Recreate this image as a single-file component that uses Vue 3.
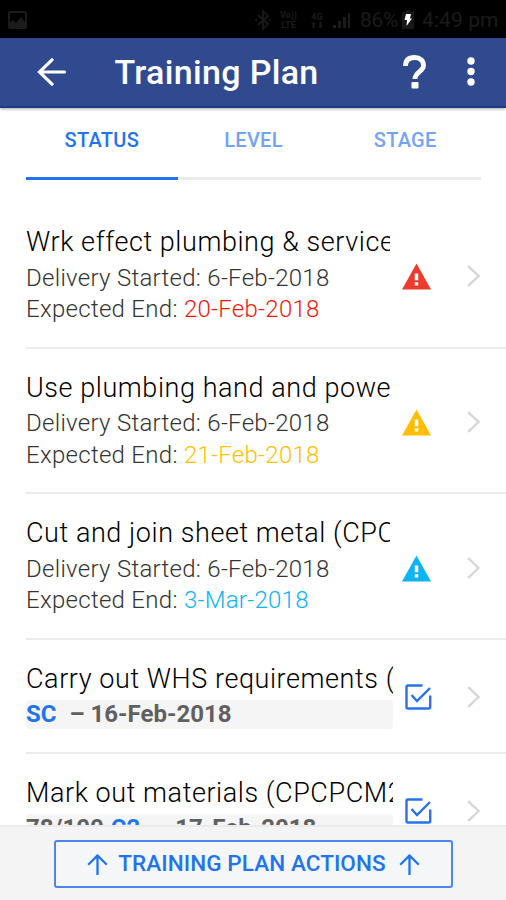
<script setup>
const tabs = ['STATUS', 'LEVEL', 'STAGE']
const items = [
  { title: 'Wrk effect plumbing & service', end: '20-Feb-2018', tone: 'red' },
  { title: 'Use plumbing hand and powe', end: '21-Feb-2018', tone: 'amber' },
  { title: 'Cut and join sheet metal (CPC', end: '3-Mar-2018', tone: 'cyan' },
  { title: 'Carry out WHS requirements (', done: true, code: 'SC', date: '– 16-Feb-2018' },
  { title: 'Mark out materials (CPCPCM2', done: true, score: '78/100', code: 'C2', date: '– 17-Feb-2018' },
]
</script>

<template>
  <div class="screen">
    <div class="statusbar">
      <svg class="picture" width="19" height="18" viewBox="0 0 19 18">
        <rect x="1" y="1" width="17" height="16" rx="1.5" fill="none" stroke="currentColor" stroke-width="2" />
        <path d="M1 12l4-3 3 3 5-6 5 6v5H1z" fill="currentColor" />
      </svg>
      <div class="indicators">
        <svg class="bt" width="18" height="20" viewBox="0 0 18 20" fill="none" stroke="currentColor" stroke-width="1.7">
          <path d="M4 5l10 9-5 5V1l5 5-10 9M1 10h2M15 10h2" />
        </svg>
        <div class="stack volte"><span>Vo))</span><span>LTE</span></div>
        <div class="stack g4"><span>4G</span><svg width="12" height="6" viewBox="0 0 12 6" fill="currentColor"><path d="M0 2l2.500-2L5 2H3.500v4h-2V2zM7 4l2.500 2L12 4h-1.500V0h-2v4z" /></svg></div>
        <svg class="signal" width="18" height="16" viewBox="0 0 18 16" fill="currentColor">
          <path d="M0 13h3v3H0zM5 9h3v7H5zM10 5h3v11h-3zM15 1h2v15h-2z" />
        </svg>
        <span class="percent">86%</span>
        <svg class="battery" width="12" height="20" viewBox="0 0 12 20">
          <path d="M4 0h4v2h4v17H0V2h4z" fill="#171717" />
          <path d="M4 4h5L8 8.500h2L4.500 16l.5-6H2.500z" fill="#fff" />
        </svg>
        <span class="clock">4:49 pm</span>
      </div>
    </div>

    <header class="toolbar">
      <svg class="back" width="30" height="28" viewBox="0 0 30 28" fill="none" stroke="#fff" stroke-width="3.200" stroke-linecap="round">
        <path d="M15 1.800L2.500 14 15 26.200M2.500 14H27.500" />
      </svg>
      <h1>Training Plan</h1>
      <svg class="help" width="26" height="36" viewBox="0 0 26 36">
        <path d="M3.500 12C3.500 6 7 3.500 12.500 3.500s9 2.800 9 8c0 6-8.500 6.500-8.500 13.500" fill="none" stroke="#fff" stroke-width="4.800" />
        <rect x="9.500" y="28" width="7" height="6.500" rx="1" fill="#fff" />
      </svg>
      <svg class="more" width="8" height="30" viewBox="0 0 8 30" fill="#fff">
        <circle cx="4" cy="4" r="3.700" /><circle cx="4" cy="14.500" r="3.700" /><circle cx="4" cy="25" r="3.700" />
      </svg>
    </header>

    <nav class="tabs">
      <div v-for="(t, i) in tabs" :key="t" class="tab" :class="{ active: i === 0 }">{{ t }}</div>
    </nav>

    <main class="list">
      <article v-for="it in items" :key="it.title" class="item" :class="{ done: it.done }">
        <div class="body">
          <h2>{{ it.title }}</h2>
          <template v-if="!it.done">
            <p>Delivery Started: 6-Feb-2018</p>
            <p>Expected End: <span :class="it.tone">{{ it.end }}</span></p>
          </template>
          <div v-else class="result">
            <span v-if="it.score" class="score">{{ it.score }}</span>
            <span class="code">{{ it.code }}</span>
            <span class="date" :class="{ wide: it.score }">{{ it.date }}</span>
          </div>
        </div>
        <svg v-if="!it.done" class="warn" :class="it.tone" width="29" height="27" viewBox="0 0 30 27">
          <path d="M15 0l15 27H0z" fill="currentColor" />
          <path d="M13.200 10.500h3.600v7h-3.600zM13.200 19.500h3.600v3.200h-3.600z" fill="#fff" />
        </svg>
        <svg v-else class="check" width="27" height="26" viewBox="0 0 27 26" fill="none" stroke="#2671ed" stroke-width="2.400">
          <path d="M17.500 1.500H3Q1.500 1.500 1.500 3v20Q1.500 24.500 3 24.500h20.700q1.500 0 1.500-1.500V11.500" />
          <path d="M6.500 11l5.500 6L25 4" />
        </svg>
        <svg class="chevron" width="13" height="22" viewBox="0 0 13 22" fill="none" stroke="#d6d6d6" stroke-width="2.300">
          <path d="M1.200 1.200L11.500 11 1.200 20.800" />
        </svg>
      </article>
    </main>

    <footer class="footer">
      <button class="action">
        <svg v-for="n in 2" :key="n" :class="'arrow' + n" width="21" height="21" viewBox="0 0 21 21" fill="none" stroke="currentColor" stroke-width="2.300">
          <path d="M1.200 10.800l9.300-9.300 9.300 9.300M10.500 1.500V21" />
        </svg>
        <span>TRAINING PLAN ACTIONS</span>
      </button>
    </footer>
  </div>
</template>

<style>
body { margin: 0; overflow: hidden; }
</style>

<style scoped>
* { box-sizing: border-box; }
.screen { width: 506px; height: 900px; display: flex; flex-direction: column; overflow: hidden; background: #fff; font-family: Roboto, "Liberation Sans", sans-serif; }
svg { display: block; flex: none; }
.statusbar { flex: none; height: 38px; background: #000; color: #1b1b1b; display: flex; align-items: center; justify-content: space-between; padding: 2px 8px 0 8px; }
.indicators { display: flex; align-items: center; white-space: nowrap; }
.bt { margin-right: 6px; }
.stack { display: flex; flex-direction: column; align-items: center; font-size: 9px; line-height: 10px; font-weight: 700; }
.volte { width: 21px; margin-right: 10px; }
.g4 { width: 16px; margin-right: 8px; }
.signal { margin-right: 9px; }
.percent { font-size: 21px; width: 39px; margin-right: 3px; letter-spacing: -0.3px; }
.battery { margin-right: 8px; }
.clock { font-size: 21px; width: 76px; letter-spacing: 0.1px; }
.toolbar { flex: none; height: 70px; background: #314a8f; border-bottom: 2px solid #193b86; box-shadow: 0 1px 3px rgba(0,0,0,.35); display: flex; align-items: center; padding-left: 37px; z-index: 1; }
.back { margin-right: 47.500px; }
h1 { margin: 0; font-size: 34px; line-height: 40px; font-weight: 500; letter-spacing: 0.33px; color: #fff; width: 287px; white-space: nowrap; }
.more { margin-left: 39px; }
.tabs { flex: none; height: 72px; margin: 0 25px 0 26px; display: flex; }
.tab { flex: 1; text-align: center; font-size: 20px; line-height: 24px; padding-top: 20px; font-weight: 500; letter-spacing: 0.3px; color: #73a3f6; border-bottom: 3px solid #ebebeb; }
.tab.active { color: #2174ee; border-bottom-color: #2174ee; }
.list { flex: 1; min-height: 0; overflow: hidden; padding: 23px 0 0 26px; }
.item { height: 145.7px; display: flex; align-items: center; border-bottom: 2px solid #ececec; }
.body { width: 364px; height: 100%; padding-top: 21px; overflow: hidden; }
h2 { margin: 0; font-size: 27px; line-height: 36px; font-weight: 300; letter-spacing: 0.57px; color: #000; white-space: nowrap; }
p { margin: 0; font-size: 24px; line-height: 31.500px; font-weight: 300; letter-spacing: 0.29px; color: #333; white-space: nowrap; }
p:first-of-type { margin-top: 2.500px; }
.red { color: #f0180c; }
.amber { color: #ffbe00; }
.cyan { color: #0cb4f3; }
.warn { margin-left: 12px; margin-top: 4px; }
.warn.red { color: #ee3a2c; }
.chevron { margin-left: 36px; margin-top: 3px; }
.done { height: 114px; }
.done .body { width: 367px; }
.done .check { margin-left: 12px; margin-top: 2px; }
.done .chevron { margin-left: 35px; margin-top: 2px; }
.result { height: 29px; background: #f5f5f5; border-radius: 4px; display: flex; font-size: 24px; line-height: 29px; font-weight: 700; color: #606060; white-space: nowrap; margin-top: 3px; }
.code { color: #2174ee; margin-right: 13px; }
.score { margin-right: 7px; }
.wide { margin-left: 1px; }
.footer { flex: none; height: 75px; background: #f4f4f4; border-top: 2px solid #ebebeb; padding: 13px 53px 11px 54px; z-index: 1; }
.action { width: 399px; height: 48px; padding: 0 0 2px; border: 2px solid #4a86ee; border-radius: 3px; background: #f5f6f8; color: #2174ee; font: 500 22.500px/28px Roboto, sans-serif; letter-spacing: 0.07px; display: flex; align-items: center; justify-content: center; gap: 10px; white-space: nowrap; }
.action svg { margin-top: 2px; }
.arrow2 { order: 2; margin-left: 3px; }
</style>
